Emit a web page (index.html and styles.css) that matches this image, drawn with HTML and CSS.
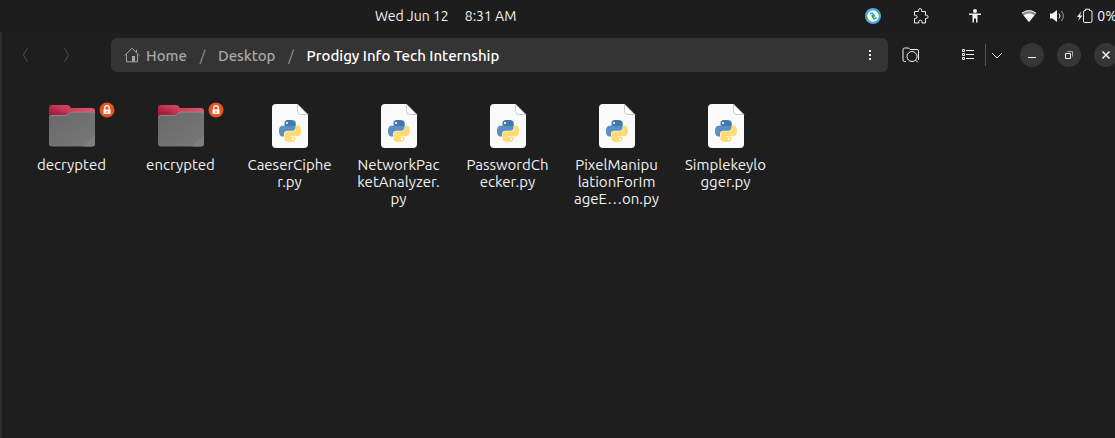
FILE: index.html
```html
<!DOCTYPE html>
<html lang="en">
<head>
<meta charset="utf-8">
<title>Prodigy Info Tech Internship</title>
<link rel="stylesheet" href="styles.css">
</head>
<body>
<svg class="defs" aria-hidden="true">
  <defs>
    <linearGradient id="tab" x1="0" y1="1" x2="1" y2="0"><stop offset="0" stop-color="#8c1a3a"/><stop offset=".4" stop-color="#a82344"/><stop offset=".55" stop-color="#cc3755"/><stop offset="1" stop-color="#ea6078"/></linearGradient>
    <linearGradient id="front" x1="0" y1="0" x2="1" y2="1"><stop offset="0" stop-color="#696969"/><stop offset="1" stop-color="#787878"/></linearGradient>
    <symbol id="folder" viewBox="0 0 48 48">
      <path fill="url(#tab)" d="M4 3h15q2 0 3 1.500l1 1.500h21q3 0 3 3v14H1V6q0-3 3-3z"/>
      <path fill="#8a8a8a" d="M4 13h13q2 0 3-1.200l1-1q1-1.300 3-1.300h20q3 0 3 3v28q0 3.500-3 3.500H4q-3 0-3-3.500V17q0-4 3-4z"/>
      <path fill="url(#front)" d="M4 14h13q2 0 3-1.200l1-1q1-1.300 3-1.300h20q3 0 3 3V41q0 3.500-3 3.500H4q-3 0-3-3.500V17.500q0-3.500 3-3.500z"/>
      <path fill="#7e7e7e" d="M35 44.500 47 33v8q0 3.500-3 3.500z"/>
    </symbol>
    <symbol id="python" viewBox="0 0 48 48">
      <path fill="#fafafa" d="M10 2h21.500L42 12.500V42q0 4-4 4H10q-4 0-4-4V6q0-4 4-4z"/>
      <path fill="#fff" stroke="#bdbdbd" stroke-width=".8" d="M31.500 2.300V9q0 3.500 3.500 3.500h6.700z"/>
      <g transform="translate(13 18)">
        <path fill="#5b8fc0" d="M11 0C5.400 0 5.700 2.400 5.700 2.400V5h5.400v.8H3.600S0 5.400 0 11s3.200 5.400 3.200 5.400H5v-2.600s0-3 3.200-3h5.300s3 0 3-3.200V3.100S17 0 11 0z"/>
        <path fill="#4178ae" d="M11 0C5.400 0 5.700 2.400 5.700 2.400V6h10.800V3.100S17 0 11 0z"/>
        <path fill="#ffdc73" d="M11 22c5.600 0 5.300-2.400 5.300-2.400V17h-5.400v-.8h7.500s3.600.4 3.600-5.200-3.200-5.400-3.200-5.400H17v2.600s0 3-3.200 3H8.500s-3 0-3 3.200v4.500S5 22 11 22z"/>
        <circle cx="8" cy="3" r="1.100" fill="#fff"/><circle cx="14" cy="19" r="1.100" fill="#fff"/>
      </g>
    </symbol>
    <symbol id="lock" viewBox="0 0 16 16">
      <circle cx="8" cy="8" r="7.500" fill="#e95420"/>
      <path d="M5.800 8V5.800a2.200 2.200 0 0 1 4.400 0V8" fill="none" stroke="#fff" stroke-width="1.300"/>
      <path fill="#fff" d="M4.500 7.500h7V12h-7z"/><path fill="#e95420" d="M7.500 9h1v2h-1z"/>
    </symbol>
  </defs>
</svg>

<header class="topbar">
  <time class="clock"><span>Wed Jun 12</span><span>8:31 AM</span></time>
  <div class="status">
    <svg class="icon sync" viewBox="0 0 16 16"><circle cx="8" cy="8" r="8" fill="#48a9e6"/><path d="M1 12A8 8 0 0 1 15.500 6L8 8z" fill="#2fae61"/><circle cx="8" cy="8" r="5.800" fill="#fff"/><path fill="none" stroke="#2d9fe0" stroke-width="1.600" d="M5 5.500h2.500L9 7.500 6.500 8"/><path fill="none" stroke="#2fae61" stroke-width="1.600" d="M7 9l3-1.500M11.500 9.500 9 11 7.500 9"/></svg>
    <svg class="icon puzzle" viewBox="0 0 16 16"><path class="line" d="M1.500 3.500h4V2.200a1.600 1.600 0 0 1 3.200 0v1.300h3.800v3.800h1a1.600 1.600 0 0 1 0 3.200h-1v4.500h-3.500v-1.300a1.600 1.600 0 0 0-3.200 0V15H1.500v-4.500h1a1.600 1.600 0 0 0 0-3.200h-1z"/></svg>
    <svg class="icon person" viewBox="0 0 16 16"><circle cx="8" cy="3" r="2"/><path d="M2 5.500h12V7h-3.500v7.500H9V10.500H7v4H5.500V7H2z"/></svg>
    <svg class="icon wifi" viewBox="0 0 16 16"><path opacity=".5" d="M.5 5Q8-1 15.500 5L8 14z"/><path d="M2.500 7.200q5.500-4 11 0L8 14z"/><path class="line" d="M1 5.200q7-5 14 0"/></svg>
    <svg class="icon volume" viewBox="0 0 16 16"><path d="M1 5.500h2.500L8 2v12l-4.500-3.500H1z"/><path class="line" d="M10 5.500q2 2.500 0 5"/><path class="line" opacity=".6" d="M12.300 3q4 5 0 10"/></svg>
    <svg class="icon battery" viewBox="0 0 16 16"><path d="M4.500 3 0 9h2.500L1 13l4.500-5.500H3z"/><path class="line" d="M8.500 2.500V1.200h4v1.300h1q1.500 0 1.500 1.500v9q0 1.500-1.500 1.500h-6Q6.500 14.500 6.500 13V4Q6.500 2.500 8 2.500z"/></svg>
    <span>0%</span>
  </div>
</header>

<main class="window">
  <nav class="toolbar" aria-label="Files">
    <div class="history">
      <button class="tool" aria-label="Back" disabled><svg class="icon" viewBox="0 0 16 16"><path class="line" d="M9.500 1 5.500 8l4 7"/></svg></button>
      <button class="tool" aria-label="Forward" disabled><svg class="icon" viewBox="0 0 16 16"><path class="line" d="m6.500 1 4 7-4 7"/></svg></button>
    </div>
    <div class="path">
      <a class="crumb" href="#home"><svg class="icon" viewBox="0 0 16 16"><path class="line" d="M.7 8.500 8 1.200l7.300 7.300M12.500 5V2.800M2.500 7.500v7.300h11V7.500"/><path d="M8 9h3v5.500H8z"/></svg>Home</a>
      <span class="slash">/</span>
      <a class="crumb" href="#desktop">Desktop</a>
      <span class="slash">/</span>
      <a class="crumb current" href="#here" aria-current="page">Prodigy Info Tech Internship</a>
      <button class="tool more" aria-label="Folder menu"><svg class="icon" viewBox="0 0 16 16"><path d="M6 3h2v2H6zM6 7h2v2H6zM6 11h2v2H6z"/></svg></button>
    </div>
    <button class="tool search" aria-label="Search"><svg class="icon wide" viewBox="0 0 18 16"><path class="line" d="M4 14.500H2.500q-1.500 0-1.500-1.500V2.500Q1 1 2.500 1h4L8 2.500h7q1.500 0 1.500 1.500v9"/><circle class="line" cx="10" cy="9.500" r="5"/><path class="line" d="m13.500 13 2.500 2.500"/></svg></button>
    <div class="views">
      <button class="tool" aria-label="List view"><svg class="icon" viewBox="0 0 16 16"><path class="line" d="M2.500 2.500h2v2h-2zM2.500 6.500h2v2h-2zM2.500 10.500h2v2h-2zM6 3.500h8M6 7.500h8M6 11.500h8"/></svg></button>
      <button class="tool dropdown" aria-label="View options"><svg class="icon" viewBox="0 0 16 16"><path class="line" d="m3 6 5 5 5-5"/></svg></button>
    </div>
    <div class="controls">
      <button class="round" aria-label="Minimize"><svg class="icon" viewBox="0 0 16 16"><path d="M4 10h8v1H4z"/></svg></button>
      <button class="round" aria-label="Restore"><svg class="icon" viewBox="0 0 16 16"><path class="line" d="M4.500 6.500h5v5h-5z"/><path class="line" opacity=".6" d="M6.500 4.500h5v5"/></svg></button>
      <button class="round" aria-label="Close"><svg class="icon" viewBox="0 0 16 16"><path class="line thick" d="m4.500 4.500 7 7m0-7-7 7"/></svg></button>
    </div>
  </nav>

  <ul class="files">
    <li class="file"><span class="art"><svg class="picture"><use href="#folder"/></svg><svg class="lock"><use href="#lock"/></svg></span><span>decrypted</span></li>
    <li class="file"><span class="art"><svg class="picture"><use href="#folder"/></svg><svg class="lock"><use href="#lock"/></svg></span><span>encrypted</span></li>
    <li class="file"><span class="art"><svg class="picture"><use href="#python"/></svg></span><span>CaeserCiphe<br>r.py</span></li>
    <li class="file"><span class="art"><svg class="picture"><use href="#python"/></svg></span><span>NetworkPac<br>ketAnalyzer.<br>py</span></li>
    <li class="file"><span class="art"><svg class="picture"><use href="#python"/></svg></span><span>PasswordCh<br>ecker.py</span></li>
    <li class="file"><span class="art"><svg class="picture"><use href="#python"/></svg></span><span>PixelManipu<br>lationForIm<br>ageE…on.py</span></li>
    <li class="file"><span class="art"><svg class="picture"><use href="#python"/></svg></span><span>Simplekeylo<br>gger.py</span></li>
  </ul>
</main>
</body>
</html>
```
FILE: styles.css
```css
* { box-sizing: border-box; }

body {
  margin: 0;
  min-height: 100vh;
  display: flex;
  flex-direction: column;
  overflow: hidden;
  background: #1d1d1d;
  color: #f2f2f2;
  font: 15px/17px Ubuntu, "Noto Sans", sans-serif;
}

.defs { position: absolute; width: 0; height: 0; }

.icon { width: 16px; height: 16px; flex: none; fill: currentColor; }
.icon.wide { width: 18px; }
.line { fill: none; stroke: currentColor; stroke-width: 1; }
.thick { stroke-width: 1.5; }

.topbar {
  height: 32px;
  padding-left: 375px;
  display: flex;
  align-items: center;
  justify-content: space-between;
  white-space: nowrap;
  font-size: 14px;
}
.clock { display: flex; gap: 16px; }
.status { display: flex; align-items: center; margin-right: -2px; }
.puzzle { margin-left: 32px; }
.person, .wifi { margin-left: 38px; }
.volume, .battery { margin-left: 12px; }
.status span { margin-left: 4px; }

.window {
  flex: 1;
  background: #1e1e1e;
  border-left: 2px solid #2f2f2f;
}

.toolbar {
  display: flex;
  align-items: center;
  height: 46px;
  padding-left: 7px;
  margin-right: -3px;
}

button { padding: 0; border: 0; background: none; color: inherit; font: inherit; }
.tool { width: 34px; height: 34px; flex: none; display: grid; place-items: center; }
.tool:disabled { color: #4b4b4b; }

.history { display: flex; gap: 6px; margin-right: 28px; }

.path {
  flex: 1;
  height: 34px;
  padding-left: 13px;
  display: flex;
  align-items: center;
  border-radius: 6px;
  background: #343434;
  font-weight: 500;
  white-space: nowrap;
}
.crumb { display: flex; align-items: center; gap: 6px; color: #a8a8a8; text-decoration: none; }
.current { color: #fff; }
.slash { width: 31px; text-align: center; color: #929292; font-weight: 400; }
.more { margin-left: auto; }

.search { margin-left: 6px; }
.views { display: flex; align-items: center; margin-left: 23px; }
.dropdown { width: 22px; height: 22px; border-left: 1px solid #555; }
.controls { display: flex; gap: 13px; margin-left: 13px; }
.round {
  width: 24px;
  height: 24px;
  border-radius: 50%;
  display: grid;
  place-items: center;
  background: #363636;
}

.files {
  display: grid;
  grid-template-columns: repeat(auto-fill, 109px);
  margin: 0;
  padding: 24px 15px;
  list-style: none;
}
.file {
  display: flex;
  flex-direction: column;
  align-items: center;
  gap: 6px;
  text-align: center;
}
.art { position: relative; height: 48px; }
.picture { display: block; width: 48px; height: 48px; }
.lock { position: absolute; top: 0; right: -19px; width: 16px; height: 16px; }
```
